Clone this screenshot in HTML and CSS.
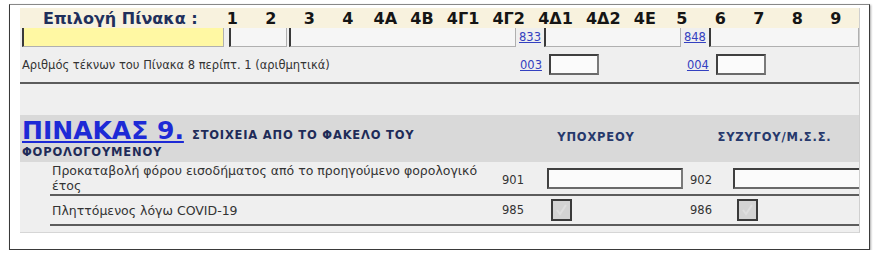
FILE: index.html
```html
<!DOCTYPE html>
<html lang="el">
<head>
    <meta charset="UTF-8">
    <title>Πίνακας 9</title>
    <link rel="stylesheet" href="styles.css">
</head>
<body>
<div id="frame">
    <div id="panel">
        <div id="picker">
            <span class="picker-label">Επιλογή Πίνακα :</span>
            <span class="tab">1</span>
            <span class="tab">2</span>
            <span class="tab">3</span>
            <span class="tab">4</span>
            <span class="tab wide">4A</span>
            <span class="tab wide">4B</span>
            <span class="tab wide">4Γ1</span>
            <span class="tab wide">4Γ2</span>
            <span class="tab wide">4Δ1</span>
            <span class="tab wide">4Δ2</span>
            <span class="tab wide">4E</span>
            <span class="tab">5</span>
            <span class="tab">6</span>
            <span class="tab">7</span>
            <span class="tab">8</span>
            <span class="tab">9</span>
        </div>

        <div class="row cut">
            <span class="stub yellow s1"></span>
            <span class="stub s2"></span>
            <span class="stub s3"></span>
            <a class="code top" href="#">833</a>
            <span class="stub s4"></span>
            <a class="code top" href="#">848</a>
            <span class="stub s5"></span>
        </div>

        <div class="row line kids">
            <span class="label">Αριθμός τέκνων του Πίνακα 8 περίπτ. 1 (αριθμητικά)</span>
            <a class="code c1" href="#">003</a>
            <span class="field small"></span>
            <a class="code c2" href="#">004</a>
            <span class="field small"></span>
        </div>

        <div class="row blank"></div>

        <div class="band">
            <div class="heading">
                <a class="table-title" href="#">ΠΙΝΑΚΑΣ 9.</a>
                <span class="subtitle">ΣΤΟΙΧΕΙΑ ΑΠΟ ΤΟ ΦΑΚΕΛΟ ΤΟΥ ΦΟΡΟΛΟΓΟΥΜΕΝΟΥ</span>
            </div>
            <div class="who">ΥΠΟΧΡΕΟΥ</div>
            <div class="who">ΣΥΖΥΓΟΥ/Μ.Σ.Σ.</div>
        </div>

        <div class="srow line">
            <span class="slabel">Προκαταβολή φόρου εισοδήματος από το προηγούμενο φορολογικό έτος</span>
            <span class="scode">901</span>
            <span class="cell"><span class="field big"></span></span>
            <span class="scode">902</span>
            <span class="cell"><span class="field big"></span></span>
        </div>

        <div class="srow line covid">
            <span class="slabel">Πληττόμενος λόγω COVID-19</span>
            <span class="scode">985</span>
            <span class="cell"><span class="check"><svg width="17" height="18" viewBox="0 0 17 18"><path d="M4 9 L7 13 L13 4" fill="none" stroke="#dedede" stroke-width="2"/></svg></span></span>
            <span class="scode">986</span>
            <span class="cell"><span class="check"><svg width="17" height="18" viewBox="0 0 17 18"><path d="M4 9 L7 13 L13 4" fill="none" stroke="#dedede" stroke-width="2"/></svg></span></span>
        </div>
    </div>
</div>
</body>
</html>
```

FILE: styles.css
```css
body {
    margin: 0;
    background: #fff;
    font-family: "DejaVu Sans", Verdana, sans-serif;
}
#frame {
    box-sizing: border-box;
    margin: 4px 0 0 9px;
    width: 861px;
    height: 246px;
    border: 1px solid #3a3a3a;
    border-top-color: #888;
    padding: 3px 9px 0 10px;
    box-shadow: 1px 1px 2px #aaa;
}
#panel {
    background: #efefef;
    height: 224px;
    overflow: hidden;
    border-right: 1px solid #cfcfcf;
    border-bottom: 1px solid #d6d6d6;
}

/* table picker */
#picker {
    display: flex;
    align-items: center;
    height: 20px;
    background: #f8f2de;
    font-weight: bold;
    font-size: 16px;
    white-space: nowrap;
}
.picker-label {
    color: #1f2f5c;
    padding-left: 23px;
    width: 170px;
}
.tab {
    color: #151515;
    width: 38.5px;
    text-align: center;
}
.tab.wide {
    width: auto;
    padding: 0 6.6px;
}

/* generic rows */
.row {
    display: flex;
    font-size: 11.5px;
    color: #333;
}
.line {
    border-bottom: 2px solid #5c5c5c;
}
.code {
    color: #3340c0;
    font-size: 11.5px;
}
.cut {
    height: 19px;
}
.stub {
    box-sizing: border-box;
    height: 19px;
    background: #f6f6f6;
    border-left: 2px solid #3a3a3a;
    border-right: 1px solid #b0b0b0;
    border-bottom: 1px solid #b0b0b0;
}
.stub.yellow { background: #fff8a3; }
.s1 { width: 202px; margin-left: 2px; }
.s2 { width: 58px; margin-left: 5px; }
.s3 { width: 227px; margin-left: 2px; }
.s4 { width: 137px; margin-left: 3px; }
.s5 { width: 150px; margin-left: 3px; }
.code.top {
    margin-left: 3px;
    margin-top: 2px;
    line-height: 14px;
}

.kids {
    height: 35px;
    align-items: center;
}
.kids .label {
    width: 498px;
    padding-left: 2px;
}
.kids .code.c2 {
    margin-left: 88px;
}
.field {
    box-sizing: border-box;
    background: #fbfbfb;
    border: 2px solid #404040;
    border-right-color: #7a7a7a;
    border-bottom-color: #6a6a6a;
}
.field.small {
    width: 50px;
    height: 21px;
    margin-left: 7px;
}
.blank {
    height: 31px;
}

/* section 9 */
.band {
    display: grid;
    grid-template-columns: 482px 188px 1fr;
    align-items: center;
    height: 47px;
    background: #d9d9d9;
}
.heading {
    padding-left: 2px;
    line-height: 15px;
    margin-top: 2px;
}
.table-title {
    color: #1d2ad6;
    font-size: 25px;
    font-weight: bold;
    line-height: 22px;
}
.subtitle {
    color: #1e2b58;
    font-size: 11.5px;
    font-weight: bold;
    letter-spacing: 0.8px;
    margin-left: 3px;
}
.who {
    color: #26386c;
    font-size: 11.5px;
    font-weight: bold;
    letter-spacing: 0.8px;
    text-align: center;
    margin-top: -4px;
}
.srow {
    display: grid;
    grid-template-columns: 452px 45px 143px 43px 160px;
    align-items: center;
    margin-left: 30px;
    height: 32px;
    color: #333;
    font-size: 12.5px;
}
.srow .slabel {
    padding-left: 2px;
    padding-right: 10px;
    line-height: 15px;
}
.scode {
    font-size: 11.5px;
    padding-top: 3px;
}
.covid .scode {
    padding-top: 0;
}
.cell {
    display: flex;
}
.field.big {
    width: 136px;
    height: 21px;
}
.covid {
    height: 28px;
}
.check {
    box-sizing: border-box;
    display: block;
    width: 21px;
    height: 22px;
    margin-left: 4px;
    background: #d3d3d3;
    border: 2px solid #3a3a3a;
}
.check svg {
    display: block;
}
```
